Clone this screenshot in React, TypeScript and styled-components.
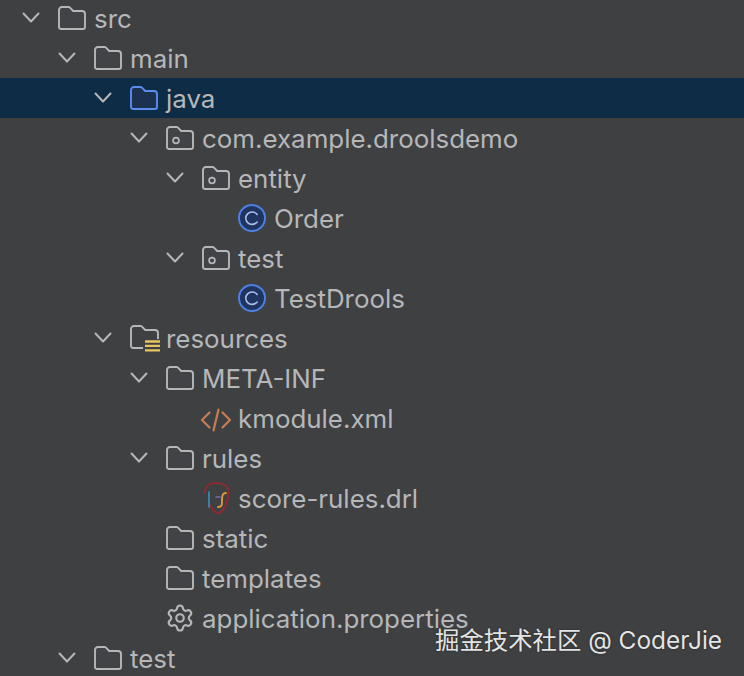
import React from "react";
import styled, { createGlobalStyle } from "styled-components";
import { Settings } from "lucide-react";

const Global = createGlobalStyle`
  html, body { margin: 0; padding: 0; height: 100%; overflow: hidden; background: #3f4042; }
  #root { height: 100%; }
`;

const Page = styled.div`
  position: relative;
  width: 744px;
  height: 676px;
  overflow: hidden;
  background: #3f4042;
  font-family: Inter, "Noto Sans", sans-serif;
`;

const Tree = styled.ul`
  list-style: none;
  margin: -2px 0 0;
  padding: 0;
`;

const Row = styled.li<{ $level: number; $selected?: boolean }>`
  display: flex;
  align-items: center;
  height: 40px;
  padding-left: ${(p) => 22 + p.$level * 36}px;
  background: ${(p) => (p.$selected ? "#0e2c45" : "transparent")};
`;

const Slot = styled.span`
  flex: none;
  width: 36px;
  height: 40px;
  display: flex;
  align-items: center;
`;

const Label = styled.span`
  font-size: 25.9px;
  line-height: 40px;
  color: #b6b7b9;
  white-space: nowrap;
  position: relative;
  top: 1px;
`;

const Watermark = styled.div`
  position: absolute;
  left: 435px;
  top: 621px;
  font-family: Inter, "Noto Sans CJK SC", sans-serif;
  font-size: 24.4px;
  line-height: 38px;
  color: #e4e4e4;
  white-space: nowrap;
  text-shadow: 0 0 2px rgba(0, 0, 0, 0.55);
`;

const ChevronSvg = styled.svg`
  margin-top: -1px;
`;

const DrlSvg = styled.svg`
  flex: none;
`;

const XmlSvg = styled.svg`
  margin: 4px 0 0 -2px;
  flex: none;
`;

const GearIcon = styled(Settings)`
  margin-left: -1px;
`;

const Chevron = () => (
  <ChevronSvg width="18" height="12" viewBox="0 0 18 12" fill="none" stroke="#b6b7b9" strokeWidth="2" strokeLinecap="round" strokeLinejoin="round">
    <path d="M1.500 1.500 9 9.500l7.500-8" />
  </ChevronSvg>
);

const folderPath = "M1 4a3 3 0 0 1 3-3h6.300a2.400 2.400 0 0 1 1.700.7L15.200 5H24a3 3 0 0 1 3 3v13a2 2 0 0 1-2 2H3a2 2 0 0 1-2-2z";

const Folder = ({ color = "#b6b7b9", fill = "#424347", dot = false }: { color?: string; fill?: string; dot?: boolean }) => (
  <svg width="28" height="24" viewBox="0 0 28 24" fill="none">
    <path d={folderPath} fill={fill} stroke={color} strokeWidth="1.900" strokeLinejoin="round" />
    {dot && <circle cx="10" cy="14.500" r="2.900" stroke={color} strokeWidth="1.700" />}
  </svg>
);

const ResourceFolder = () => (
  <svg width="32" height="28" viewBox="0 0 32 28" fill="none">
    <path d="M13 24H3a2 2 0 0 1-2-2V5a3 3 0 0 1 3-3h6.300a2.400 2.400 0 0 1 1.700.7L15.200 6H25a3 3 0 0 1 3 3v6" stroke="#b6b7b9" strokeWidth="1.900" strokeLinejoin="round" />
    <path d="M15 17.500h15M15 21.800h15M15 26.300h15" stroke="#e9c45e" strokeWidth="2.300" />
  </svg>
);

const ClassIcon = () => (
  <svg width="28" height="28" viewBox="0 0 28 28" fill="none">
    <circle cx="14" cy="14" r="13" fill="#1f3560" stroke="#4c7fe0" strokeWidth="2" />
    <path d="M19.200 10.400A6.600 6.600 0 0 0 14 8a6.200 6.200 0 0 0 0 12.400 6.600 6.600 0 0 0 5.200-2.400" stroke="#a8bfee" strokeWidth="1.600" strokeLinecap="round" />
  </svg>
);

const XmlIcon = () => (
  <XmlSvg width="32" height="26" viewBox="0 0 32 26" fill="none" stroke="#c37d55" strokeWidth="2.200" strokeLinecap="round" strokeLinejoin="round">
    <path d="M9.500 5.500 2 13l7.500 7.500M22.500 5.500 30 13l-7.500 7.500M18.500 2.500 13.500 23.500" />
  </XmlSvg>
);

const DrlIcon = () => (
  <DrlSvg width="30" height="34" viewBox="0 0 30 34" fill="none">
    <path d="M3 12C3 5 8 2 12 2c7 0 13 1 14 6 1.500 3 .5 8-1 12-1 5-5 12-9 12-3 0-5-2-8-8" stroke="#8e2a33" strokeWidth="1.900" strokeLinecap="round" />
    <path d="M7 11v15" stroke="#2f8fb5" strokeWidth="1.700" strokeLinecap="round" />
    <path d="M14 16h4" stroke="#7a6bb0" strokeWidth="1.600" strokeLinecap="round" />
    <path d="M24 12c-4 0-4 4-4 8s0 6-4 6" stroke="#d99a3c" strokeWidth="1.900" strokeLinecap="round" />
  </DrlSvg>
);

type Kind = "folder" | "source" | "package" | "resources" | "class" | "xml" | "drl" | "gear";

const icons: Record<Kind, React.ReactNode> = {
  folder: <Folder />,
  source: <Folder color="#5b8cf0" fill="#1c3150" />,
  package: <Folder dot />,
  resources: <ResourceFolder />,
  class: <ClassIcon />,
  xml: <XmlIcon />,
  drl: <DrlIcon />,
  gear: <GearIcon size={30} color="#b6b7b9" strokeWidth={1.7} />,
};

const rows: { level: number; name: string; kind: Kind; open?: boolean; selected?: boolean }[] = [
  { level: 0, name: "src", kind: "folder", open: true },
  { level: 1, name: "main", kind: "folder", open: true },
  { level: 2, name: "java", kind: "source", open: true, selected: true },
  { level: 3, name: "com.example.droolsdemo", kind: "package", open: true },
  { level: 4, name: "entity", kind: "package", open: true },
  { level: 5, name: "Order", kind: "class" },
  { level: 4, name: "test", kind: "package", open: true },
  { level: 5, name: "TestDrools", kind: "class" },
  { level: 2, name: "resources", kind: "resources", open: true },
  { level: 3, name: "META-INF", kind: "folder", open: true },
  { level: 4, name: "kmodule.xml", kind: "xml" },
  { level: 3, name: "rules", kind: "folder", open: true },
  { level: 4, name: "score-rules.drl", kind: "drl" },
  { level: 3, name: "static", kind: "folder" },
  { level: 3, name: "templates", kind: "folder" },
  { level: 3, name: "application.properties", kind: "gear" },
  { level: 1, name: "test", kind: "folder", open: true },
];

export default function App() {
  return (
    <Page>
      <Global />
      <Tree>
        {rows.map((r) => (
          <Row key={`${r.level}-${r.name}`} $level={r.level} $selected={r.selected}>
            <Slot>{r.open && <Chevron />}</Slot>
            <Slot>{icons[r.kind]}</Slot>
            <Label>{r.name}</Label>
          </Row>
        ))}
      </Tree>
      <Watermark>掘金技术社区 @ CoderJie</Watermark>
    </Page>
  );
}
